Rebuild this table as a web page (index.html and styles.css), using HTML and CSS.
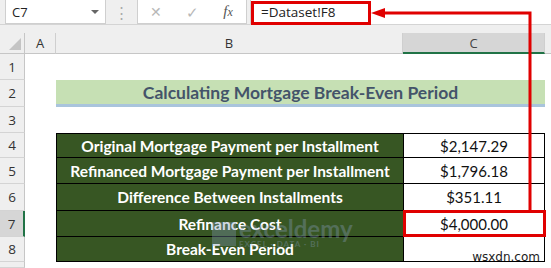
FILE: index.html
```html
<!DOCTYPE html>
<html>
<head>
<meta charset="utf-8">
<link rel="stylesheet" href="styles.css">
</head>
<body>
<div class="app">
  <div class="toolbar">
    <div class="namebox"><span class="ref">C7</span><span class="caret"></span></div>
    <div class="dots">⋮</div>
    <div class="fbtns">
      <span class="fb x">✕</span>
      <span class="fb ok">✓</span>
      <span class="fb fx"><i>f</i><i class="xs">x</i></span>
    </div>
    <div class="finput"><span class="ftext">=Dataset!F8</span></div>
  </div>
  <div class="sheet">
    <div class="corner"><span class="tri"></span></div>
    <div class="ch">A</div>
    <div class="ch">B</div>
    <div class="ch sel">C</div>
    <div class="ch rest"></div>

    <div class="rh">1</div><div class="c span4"></div>
    <div class="rh">2</div><div class="c"></div><div class="title">Calculating Mortgage Break-Even Period</div><div class="c"></div>
    <div class="rh">3</div><div class="c span4"></div>

    <div class="rh">4</div><div class="c"></div><div class="lab top">Original Mortgage Payment per Installment</div><div class="val top">$2,147.29</div><div class="c"></div>
    <div class="rh">5</div><div class="c"></div><div class="lab">Refinanced Mortgage Payment per Installment</div><div class="val">$1,796.18</div><div class="c"></div>
    <div class="rh">6</div><div class="c"></div><div class="lab">Difference Between Installments</div><div class="val">$351.11</div><div class="c"></div>
    <div class="rh rsel">7</div><div class="c"></div><div class="lab">Refinance Cost</div><div class="val">$4,000.00</div><div class="c"></div>
    <div class="rh">8</div><div class="c"></div><div class="lab">Break-Even Period</div><div class="val"><span class="wm2">wsxdn.com</span></div><div class="c"></div>
    <div class="rh"></div><div class="c span4"></div>
  </div>
  <div class="watermark"><span class="wlogo"></span><span class="wtext">exceldemy<small>EXCEL · DATA · BI</small></span></div>
  <svg class="overlay" width="551" height="268" viewBox="0 0 551 268">
    <rect x="252.5" y="2.5" width="117" height="21" fill="none" stroke="#e00000" stroke-width="3"/>
    <polyline points="382,13 530,13 530,210" fill="none" stroke="#e00000" stroke-width="3"/>
    <polygon points="371,13 385,8 385,18" fill="#e00000"/>
    <rect x="404.5" y="211.5" width="140" height="24" fill="none" stroke="#e00000" stroke-width="3"/>
  </svg>
</div>
</body>
</html>
```
FILE: styles.css
```css
html, body { margin: 0; padding: 0; }
body { width: 551px; height: 268px; overflow: hidden; background: #fff; font-family: "Open Sans", "Noto Sans", sans-serif; }
.app { position: relative; width: 551px; height: 268px; background: #efefef; }

.toolbar { height: 25px; display: flex; align-items: stretch; border-bottom: 1px solid #d4d4d4; box-sizing: border-box; }
.namebox { width: 101px; margin-left: 5px; background: #fff; border: 1px solid #cfcfcf; border-top: none; box-sizing: border-box; display: flex; align-items: center; justify-content: space-between; padding: 0 6px 0 6px; }
.ref { font-size: 13px; color: #222; }
.caret { width: 0; height: 0; border-left: 4px solid transparent; border-right: 4px solid transparent; border-top: 4px solid #666; }
.dots { width: 31px; color: #aaa; font-size: 15px; display: flex; align-items: center; justify-content: center; }
.fbtns { width: 110px; background: #fff; border: 1px solid #cfcfcf; border-top: none; box-sizing: border-box; display: flex; align-items: center; }
.fb { width: 36px; text-align: center; color: #b8b8b8; font-size: 15px; }
.fb.x { font-size: 14px; }
.fb.fx { color: #555; font-family: "Liberation Serif", serif; font-size: 15px; }
.fb.fx .xs { font-size: 12px; }
.finput { flex: 1; margin-left: 3px; background: #fff; border-left: 1px solid #cfcfcf; display: flex; align-items: center; }
.ftext { margin-left: 10px; font-size: 13.5px; color: #222; }

.sheet { margin-top: 8px; display: grid; grid-template-columns: 25px 31px 347px 142px 1fr; grid-template-rows: 21px 26px 27px 26px 25px 26px 27px 26px 25px 6px; background: #fff; }
.corner { background: #efefef; border-right: 1px solid #c6c6c6; border-bottom: 1px solid #c6c6c6; position: relative; }
.tri { position: absolute; right: 3px; bottom: 3px; width: 0; height: 0; border-left: 12px solid transparent; border-bottom: 12px solid #c4c4c4; }
.ch { background: #efefef; border-right: 1px solid #cfcfcf; border-bottom: 1px solid #c6c6c6; font-size: 13px; color: #333; display: flex; align-items: center; justify-content: center; font-family: "Open Sans", sans-serif; }
.ch.sel { background: #d6d6d6; border-bottom: 2px solid #217346; color: #444; }
.ch.rest { border-right: none; }
.rh { background: #efefef; border-right: 1px solid #c6c6c6; border-bottom: 1px solid #d4d4d4; font-size: 13.5px; color: #333; display: flex; align-items: center; justify-content: center; font-family: "Open Sans", sans-serif; }
.rh.rsel { background: #d6d6d6; border-right: 2px solid #217346; }
.c { background: #fff; }
.span4 { grid-column: 2 / 6; }

.title { grid-column: 3 / 5; background: #c6e0b4; border-bottom: 3px solid #a9c4dc; box-sizing: border-box; height: 27px; display: flex; align-items: center; justify-content: center; font-family: "Lato", sans-serif; font-weight: 700; font-size: 17.5px; color: #44546a; }

.lab { background: #375623; color: #fff; font-family: "Lato", sans-serif; font-weight: 700; font-size: 15.5px; display: flex; align-items: center; justify-content: center; border-left: 1px solid #000; border-bottom: 1px solid #000; }
.val { background: #fff; color: #111; font-family: "Lato", sans-serif; font-size: 15px; display: flex; align-items: center; justify-content: center; border-left: 1px solid #000; border-right: 1px solid #000; border-bottom: 1px solid #000; position: relative; }
.top { border-top: 1px solid #000; }
.wm2 { position: absolute; right: 4px; bottom: -3px; font-family: "DejaVu Sans", sans-serif; font-size: 12px; color: #222; }

.watermark { position: absolute; left: 212px; top: 218px; display: flex; align-items: center; opacity: 0.35; pointer-events: none; }
.wlogo { width: 24px; height: 24px; background: #7f96b8; margin-right: 3px; }
.wtext { display: flex; flex-direction: column; font-family: "Lato", sans-serif; font-weight: 700; font-size: 24px; line-height: 22px; color: #8a9fc0; }
.wtext small { font-size: 8px; line-height: 9px; letter-spacing: 1px; }

.overlay { position: absolute; left: 0; top: 0; pointer-events: none; }
```
